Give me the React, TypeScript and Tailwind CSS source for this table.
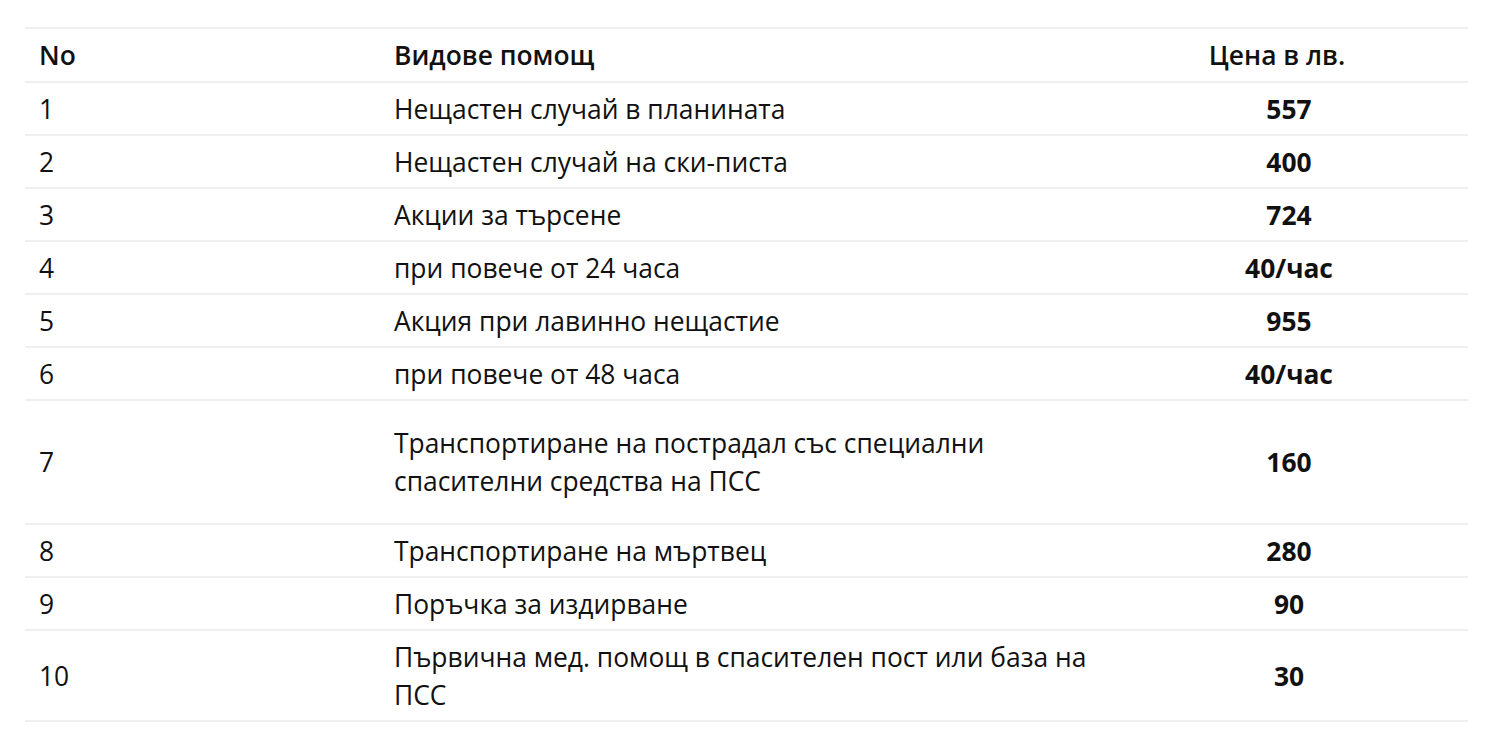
const rows: { no: string; name: string; price: string; pad?: string }[] = [
  { no: '1', name: 'Нещастен случай в планината', price: '557' },
  { no: '2', name: 'Нещастен случай на ски-писта', price: '400' },
  { no: '3', name: 'Акции за търсене', price: '724' },
  { no: '4', name: 'при повече от 24 часа', price: '40/час' },
  { no: '5', name: 'Акция при лавинно нещастие', price: '955' },
  { no: '6', name: 'при повече от 48 часа', price: '40/час' },
  { no: '7', name: 'Транспортиране на пострадал със специални спасителни средства на ПСС', price: '160', pad: 'py-[23px]' },
  { no: '8', name: 'Транспортиране на мъртвец', price: '280' },
  { no: '9', name: 'Поръчка за издирване', price: '90' },
  { no: '10', name: 'Първична мед. помощ в спасителен пост или база на ПСС', price: '30', pad: 'py-[6.5px]' },
];

export default function App() {
  return (
    <main className="min-h-screen bg-white pt-[27px] pl-[25px] text-[#111] font-['Open_Sans',sans-serif]">
      <div className="w-[1443px] border-t-2 border-[#efefef] text-[26.4px] leading-[38px]">
        <div className="grid grid-cols-[355px_730px_1fr] items-center border-b-2 border-[#efefef] py-[7px] font-semibold">
          <div className="px-[14px]">No</div>
          <div className="px-[14px]">Видове помощ</div>
          <div className="pl-[14px] pr-[38px] text-center">Цена в лв.</div>
        </div>
        {rows.map((r) => (
          <div
            key={r.no}
            className={
              'grid grid-cols-[355px_730px_1fr] items-center border-b-2 border-[#efefef] ' + (r.pad ?? 'py-[6.5px]')
            }
          >
            <div className="px-[14px]">{r.no}</div>
            <div className="px-[14px]">{r.name}</div>
            <div className="px-[14px] text-center font-bold">{r.price}</div>
          </div>
        ))}
      </div>
    </main>
  );
}
